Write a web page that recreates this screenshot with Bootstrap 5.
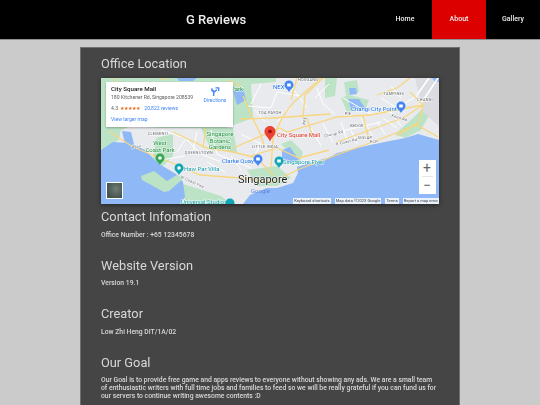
<!DOCTYPE html>
<html lang="en">
<head>
  <meta charset="UTF-8">
  <title>About – G Reviews</title>
  <meta name="viewport" content="width=device-width, initial-scale=1.0" />
  <link href="https://cdn.jsdelivr.net/npm/bootstrap@5.3.2/dist/css/bootstrap.min.css" rel="stylesheet" />
  <style>
    body {
      font-family: Roboto, "Liberation Sans", sans-serif;
      background-color: #cbcbcb;
      color: #d4d4d4;
    }
    .soft-page { filter: blur(.4px); }
    .top-bar {
      height: 40px;
      background: #000;
      border-bottom: 1px solid #8f8f8f;
    }
    .brand-name {
      left: 186px;
      top: 11px;
      font-size: 13px;
      line-height: 17px;
      font-weight: 500;
      color: #eee;
    }
    .top-link {
      width: 54px;
      height: 39px;
      font-size: 7px;
      font-weight: 500;
      color: #eee;
      text-decoration: none;
    }
    .top-link.is-on { background: #dc0000; }
    .info-panel {
      width: 380px;
      margin: 7px auto 0;
      padding: 6.5px 20px 20px;
      background: #454545;
      border: 1px solid #707070;
      border-bottom: 0;
    }
    .info-panel h2 {
      font-size: 12.8px;
      line-height: 17px;
      font-weight: 400;
      margin: 0 0 5.5px;
      color: #d8d8d8;
    }
    .info-panel p {
      font-size: 6.8px;
      line-height: 8px;
      font-weight: 500;
      margin: 0;
      color: #d8d8d8;
    }
    .info-block { margin-bottom: 18px; }
    .map-box {
      width: 338px;
      height: 126px;
      margin-top: 6px;
      margin-bottom: 4.5px;
      box-shadow: 0 1px 4px rgba(0,0,0,.5);
      overflow: hidden;
    }
    .map-box svg { display: block; }
    .map-card {
      left: 5px;
      top: 4px;
      width: 127px;
      height: 45px;
      background: #fff;
      color: #5b5b5b;
      font-size: 5.1px;
      line-height: 6px;
      padding: 4px 5px;
      box-shadow: 0 1px 2px rgba(0,0,0,.3);
    }
    .map-card b { display: block; font-size: 6.2px; font-weight: 500; color: #222; margin-bottom: 2.7px; }
    .map-card .blue-txt { color: #4285f4; }
    .map-card .star-txt { color: #e7711b; letter-spacing: -.2px; margin: 0 5px 0 1px; }
    .rate-row { margin-top: 5.3px; }
    .more-row { margin-top: 4.7px; }
    .map-dirs { right: 5px; top: 5px; width: 26px; text-align: center; color: #4285f4; line-height: 5px; }
    .map-dirs svg { margin: 0 auto 2px; }
    .map-zoom {
      right: 3.5px;
      bottom: 10px;
      width: 17px;
      height: 34px;
      background: #fff;
      color: #666;
      font-size: 14px;
      line-height: 16.5px;
      text-align: center;
    }
    .map-zoom i { display: block; height: 1px; margin: 0 3px; background: #e6e6e6; }
    .map-foot {
      right: 0;
      bottom: 0;
      height: 6px;
      color: #444;
      font-size: 4.1px;
      line-height: 6px;
      white-space: nowrap;
    }
    .map-foot span { background: rgba(255,255,255,.8); padding: 0 1px; }
    .map-thumb {
      left: 5px;
      bottom: 5px;
      width: 17px;
      height: 17px;
      border: 1px solid #fff;
      background: radial-gradient(circle at 60% 40%, #6f7d72, #46564f 70%);
    }
    .halo text { paint-order: stroke; stroke: #fff; stroke-width: 1px; stroke-opacity: .8; }
  </style>
</head>
<body>
  <div class="soft-page">
  <nav class="top-bar d-flex justify-content-end position-relative">
    <div class="brand-name position-absolute">G Reviews</div>
    <a class="top-link d-flex align-items-center justify-content-center" href="#">Home</a>
    <a class="top-link is-on d-flex align-items-center justify-content-center" href="#">About</a>
    <a class="top-link d-flex align-items-center justify-content-center" href="#">Gallery</a>
  </nav>

  <main class="info-panel">
    <h2 class="mb-0">Office Location</h2>
    <div class="map-box position-relative">
      <svg width="338" height="126" viewBox="0 0 338 126">
        <rect width="338" height="126" fill="#e8eaed"/>
        <!-- parks -->
        <g fill="#bce3c6">
          <path d="M0 0H175V4L150 6L152 40L125 50H60L30 48L0 60Z"/>
          <path d="M0 50H20L18 62L0 72Z"/>
          <path d="M224 0H236L234 18L224 20Z"/>
          <path d="M243 4L256 2L258 14L245 18Z"/>
          <path d="M240 20L248 17L268 22L264 32L246 34Z"/>
          <path d="M294 56L310 42L324 28L331 32L320 52L304 60Z"/>
          <path d="M100 50L132 50L136 74L110 72Z"/>
          <path d="M55 60L72 56L72 78L62 88L52 80Z"/>
          <path d="M146 92L176 88L190 100L176 108L156 108Z"/>
          <path d="M180 66L190 62L202 74L198 86L186 72Z"/>
          <path d="M82 106L120 118L130 126H84Z"/>
        </g>
        <path d="M314 0H338V48L322 34Z" fill="#dadce0"/>
        <!-- water -->
        <g fill="#8fb8f6">
          <path d="M338 62L317 56L304 60L269 67L236 75L229 79L196 89L197 95L192 105L176 110L166 110L149 117L142 126H338Z"/>
          <path d="M0 72L12 64L29 65L44 72L54 82L60 87L75 96L82 104L84 119L79 126H0Z"/>
          <path d="M21 53L30 54L33 66L24 66Z"/>
          <path d="M181 72L189 69L198 82L189 85L181 80Z"/>
          <path d="M132 13L142 10L145 22L136 27Z"/>
          <path d="M248 10L255 10L256 16L249 17Z"/>
          <path d="M247 21L258 21L264 30L250 31Z"/>
          <path d="M76 0H96L92 3H78Z"/>
          <path d="M331 0H338V4H334Z"/>
        </g>
        <path d="M40 98L53 93L66 103L76 97L83 100L68 113L63 114L41 102Z" fill="#bce3c6"/>
        <!-- minor roads -->
        <g fill="none" stroke="#fff" stroke-width="1">
          <path d="M60 52L84 60L100 76L120 84M110 52L116 76L150 90M84 78L60 82M140 56L160 66L150 84M84 62L76 74M96 54L92 72M130 78L140 92M106 84L124 94"/>
          <path d="M146 28L170 30L176 14L200 18M160 6L150 26M216 10L222 26L234 36M176 44L190 30M154 32L164 44M190 8L206 30M214 20L228 6"/>
          <path d="M222 46L232 64M240 44L246 62M260 40L272 58M282 40L296 50M228 56L280 44M242 20L270 36L290 34L300 48M280 20L296 30L316 18M210 50L220 68M250 52L256 66M276 44L284 56M290 8L300 20"/>
        </g>
        <path d="M319 27L337 0M316 17L328 0" stroke="#fff" stroke-width="1.6"/>
        <!-- highways -->
        <g fill="none" stroke="#f8d67e" stroke-width="1.3">
          <path d="M9 54L32 69L49 76L76 87L99 97L139 100L172 104L196 92L238 76L269 65L316 47L337 59"/>
          <path d="M72 54L106 70L132 74L156 80L172 97"/>
          <path d="M132 70L179 50L186 54L236 39L269 37L322 27"/>
          <path d="M139 41L172 40L229 36"/>
          <path d="M142 18L152 41L159 55L164 70"/>
          <path d="M222 -2L192 25L181 40L172 60L170 90"/>
          <path d="M202 40L204 17L222 0M196 0L190 22"/>
          <path d="M236 64L302 40L322 27L309 14M276 17L296 10L309 0"/>
          <path d="M322 27L318 44L296 58M105 50L102 70"/>
          <path d="M14 0L24 18M60 0L66 2M126 2L140 8"/>
          <path d="M150 78L176 70L198 80L228 72"/>
          <path d="M206 40L212 60M262 38L268 62"/>
        </g>
        <!-- place labels -->
        <g class="halo" font-size="3.8" fill="#5f6368" text-anchor="middle" letter-spacing=".3">
          <text x="57" y="57">CLEMENTI</text>
          <text x="98" y="76">QUEENSTOWN</text>
          <text x="169" y="36">TOA PAYOH</text>
          <text x="164" y="70">LITTLE INDIA</text>
          <text x="207" y="3">HOUGANG</text>
          <text x="293" y="17">TAMPINES</text>
          <text x="324" y="23">CHANGI</text>
          <text x="256" y="49">BEDOK</text>
          <text x="264" y="61">SIGLAP</text>
          <text x="247" y="37">PIE</text>
          <text x="273" y="65">ECP</text>
          <text transform="translate(233 57) rotate(-15)">Changi Rd</text>
          <text transform="translate(246 65) rotate(-12)">E Coast Rd</text>
          <text transform="translate(298 41) rotate(18)">Koon Rd</text>
          <text transform="translate(91 105) rotate(24)">W Coast Fwy</text>
          <text transform="translate(36 70) rotate(-12)">Pasir</text>
          <text transform="translate(205 43) rotate(-80)">KPE</text>
        </g>
        <g class="halo" font-size="6" fill="#1e8e3e" text-anchor="middle">
          <text x="59" y="67">West</text>
          <text x="59" y="74">Coast Park</text>
          <text x="119" y="58">Singapore</text>
          <text x="119" y="64.5">Botanic</text>
          <text x="119" y="71">Gardens</text>
          <text x="136" y="13">Park</text>
        </g>
        <g class="halo" font-size="6" fill="#129eaf">
          <text x="83" y="93">Haw Par Villa</text>
          <text x="182" y="86">Singapore Flyer</text>
          <text x="80" y="126">Universal Studios</text>
        </g>
        <g class="halo" font-size="6" fill="#1a73e8">
          <text x="121" y="85">Clarke Quay</text>
          <text x="250" y="33">Changi City Point</text>
          <text x="172" y="11">NEX</text>
        </g>
        <g class="halo">
          <text x="176" y="59" font-size="6" fill="#d93025">City Square Mall</text>
          <text x="137" y="105" font-size="11" fill="#202124">Singapore</text>
        </g>
        <text x="150" y="115" font-size="6" fill="#5f87d8">Google</text>
        <!-- pins -->
        <g>
          <path d="M59 75.500c-2.500 0-4.500 2-4.500 4.500 0 3 3 4 4.500 7 1.500-3 4.500-4 4.500-7 0-2.500-2-4.500-4.500-4.500z" fill="#34a853"/>
          <path d="M78 85.500c-2.500 0-4.500 2-4.500 4.500 0 3 3 4 4.500 7 1.500-3 4.500-4 4.500-7 0-2.500-2-4.500-4.500-4.500z" fill="#12a5b5"/>
          <path d="M157 76.500c-2.500 0-4.500 2-4.500 4.500 0 3 3 4 4.500 7 1.500-3 4.500-4 4.500-7 0-2.500-2-4.500-4.500-4.500z" fill="#4285f4"/>
          <path d="M178 78.500c-2.500 0-4.500 2-4.500 4.500 0 3 3 4 4.500 7 1.500-3 4.500-4 4.500-7 0-2.500-2-4.500-4.500-4.500z" fill="#12a5b5"/>
          <path d="M188 2.500c-2.500 0-4.500 2-4.500 4.500 0 3 3 4 4.500 7 1.500-3 4.500-4 4.500-7 0-2.500-2-4.500-4.500-4.500z" fill="#4285f4"/>
          <path d="M300 23.500c-2.500 0-4.500 2-4.500 4.500 0 3 3 4 4.500 7 1.500-3 4.500-4 4.500-7 0-2.500-2-4.500-4.500-4.500z" fill="#4285f4"/>
          <circle cx="129" cy="125" r="4.500" fill="#12a5b5"/>
          <circle cx="59" cy="80" r="1.800" fill="#fff"/>
          <circle cx="78" cy="90" r="1.800" fill="#fff"/>
          <rect x="155.200" y="79.500" width="3.600" height="3" fill="#fff"/>
          <rect x="176.200" y="81.500" width="3.600" height="3" fill="#fff"/>
          <rect x="186.200" y="5.500" width="3.600" height="3" fill="#fff"/>
          <rect x="298.200" y="26.500" width="3.600" height="3" fill="#fff"/>
        </g>
        <path d="M169 48c-3.300 0-5.500 2.500-5.500 5.500 0 4 3.800 5.500 5.500 10 1.700-4.500 5.500-6 5.500-10 0-3-2.200-5.500-5.500-5.500z" fill="#ea4335"/>
        <circle cx="169" cy="53.500" r="1.800" fill="#a50e0e"/>
      </svg>
      <div class="map-card position-absolute">
        <b>City Square Mall</b>
        <div>180 Kitchener Rd, Singapore 208539</div>
        <div class="rate-row">4.3 <span class="star-txt">★★★★★</span><span class="blue-txt">20,822 reviews</span></div>
        <div class="more-row blue-txt">View larger map</div>
        <div class="map-dirs position-absolute">
          <svg class="d-block" width="9" height="9" viewBox="0 0 10 10"><path d="M3 10V6L1 3M1 1.500V4H3.500M3 6L6.500 3M5 1H8.500V4.500" fill="none" stroke="#4285f4" stroke-width="1.500"/></svg>
          Directions
        </div>
      </div>
      <div class="map-thumb position-absolute"></div>
      <div class="map-zoom position-absolute">+<i></i>&minus;</div>
      <div class="map-foot position-absolute d-flex gap-1">
        <span>Keyboard shortcuts</span><span>Map data ©2023 Google</span><span>Terms</span><span>Report a map error</span>
      </div>
    </div>

    <div class="info-block">
      <h2>Contact Infomation</h2>
      <p>Office Number : +65 12345678</p>
    </div>
    <div class="info-block">
      <h2>Website Version</h2>
      <p>Version 19.1</p>
    </div>
    <div class="info-block">
      <h2>Creator</h2>
      <p>Low Zhi Heng DIT/1A/02</p>
    </div>
    <div class="info-block">
      <h2>Our Goal</h2>
      <p>Our Goal is to provide free game and apps reviews to everyone without showing any ads. We are a small team of enthusiastic writers with full time jobs and families to feed so we will be really grateful if you can fund us for our servers to continue writing awesome contents :D</p>
    </div>
  </main>
  </div>
  <script src="https://cdn.jsdelivr.net/npm/bootstrap@5.3.2/dist/js/bootstrap.bundle.min.js"></script>
</body>
</html>
